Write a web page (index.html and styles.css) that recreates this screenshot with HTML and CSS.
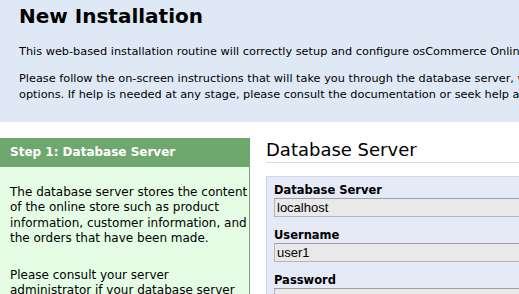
FILE: index.html
```html
<!DOCTYPE html>
<html lang="en">
<head>
  <meta charset="UTF-8" />
  <title>osCommerce Online Merchant - New Installation</title>
  <link rel="stylesheet" href="styles.css">
</head>
<body>
  <div class="intro">
    <h1>New Installation</h1>
    <p>This web-based installation routine will correctly setup and configure osCommerce Online Merchant to run on this server.</p>
    <p>Please follow the on-screen instructions that will take you through the database server, web server, and store configuration options. If help is needed at any stage, please consult the documentation or seek help at the community support forums.</p>
  </div>

  <div class="content">
    <div class="step">
      <h2>Step 1: Database Server</h2>
      <div class="step-body">
        <p>The database server stores the content of the online store such as product information, customer information, and the orders that have been made.</p>
        <p>Please consult your server administrator if your database server parameters are not yet known.</p>
      </div>
    </div>

    <div class="main">
      <h3>Database Server</h3>
      <form class="form-box">
        <div class="form-group">
          <label for="server">Database Server</label>
          <input type="text" id="server" value="localhost" />
        </div>
        <div class="form-group">
          <label for="user">Username</label>
          <input type="text" id="user" value="user1" />
        </div>
        <div class="form-group">
          <label for="pass">Password</label>
          <input type="password" id="pass" value="secret" />
        </div>
      </form>
    </div>
  </div>
</body>
</html>
```

FILE: styles.css
```css
body {
  margin: 0;
  font-family: "DejaVu Sans", Verdana, sans-serif;
  color: #000;
  background: #fff;
  overflow: hidden;
}

.intro {
  background: #dfe9f6;
  padding: 4px 19px 0;
  height: 118px;
  overflow: hidden;
}

.intro h1 {
  font-size: 20px;
  margin: 0 0 16px;
  line-height: 24px;
}

.intro p {
  width: 720px;
  font-size: 11.3px;
  line-height: 16px;
  margin: 0 0 11px;
}

.content {
  display: flex;
  gap: 16px;
  margin-top: 16px;
}

.step {
  width: 249px;
  flex-shrink: 0;
  border-right: 1px solid #6fa86f;
}

.step h2 {
  margin: 0;
  background: #6fa86f;
  color: #fff;
  font-size: 12px;
  line-height: 29px;
  padding: 0 10px;
}

.step-body {
  background: #e5fde5;
  padding: 18px 0 10px 10px;
  font-size: 12px;
  line-height: 15.4px;
}

.step-body p {
  margin: 0 0 21px;
}

.main {
  flex: 1;
  min-width: 0;
  white-space: nowrap;
}

.main h3 {
  font-size: 18px;
  font-weight: normal;
  margin: 0;
  line-height: 24px;
  border-bottom: 1px solid #dcdcdc;
}

.form-box {
  margin-top: 13px;
  background: #e5eaf6;
  border: 1px solid #cdd6ee;
  padding: 5px 0 0 7px;
  width: 400px;
}

.form-group {
  margin-bottom: 10px;
}

.form-group label {
  display: block;
  font-weight: bold;
  font-size: 11.5px;
  line-height: 16px;
}

.form-group input {
  display: block;
  width: 380px;
  height: 19px;
  box-sizing: border-box;
  margin: 0;
  padding: 0 2px;
  font-family: "Liberation Sans", Arial, sans-serif;
  font-size: 13px;
  background: #e9e9e9;
  border: 1px solid #b4b4b4;
  border-top-color: #a0a0a0;
}
```
